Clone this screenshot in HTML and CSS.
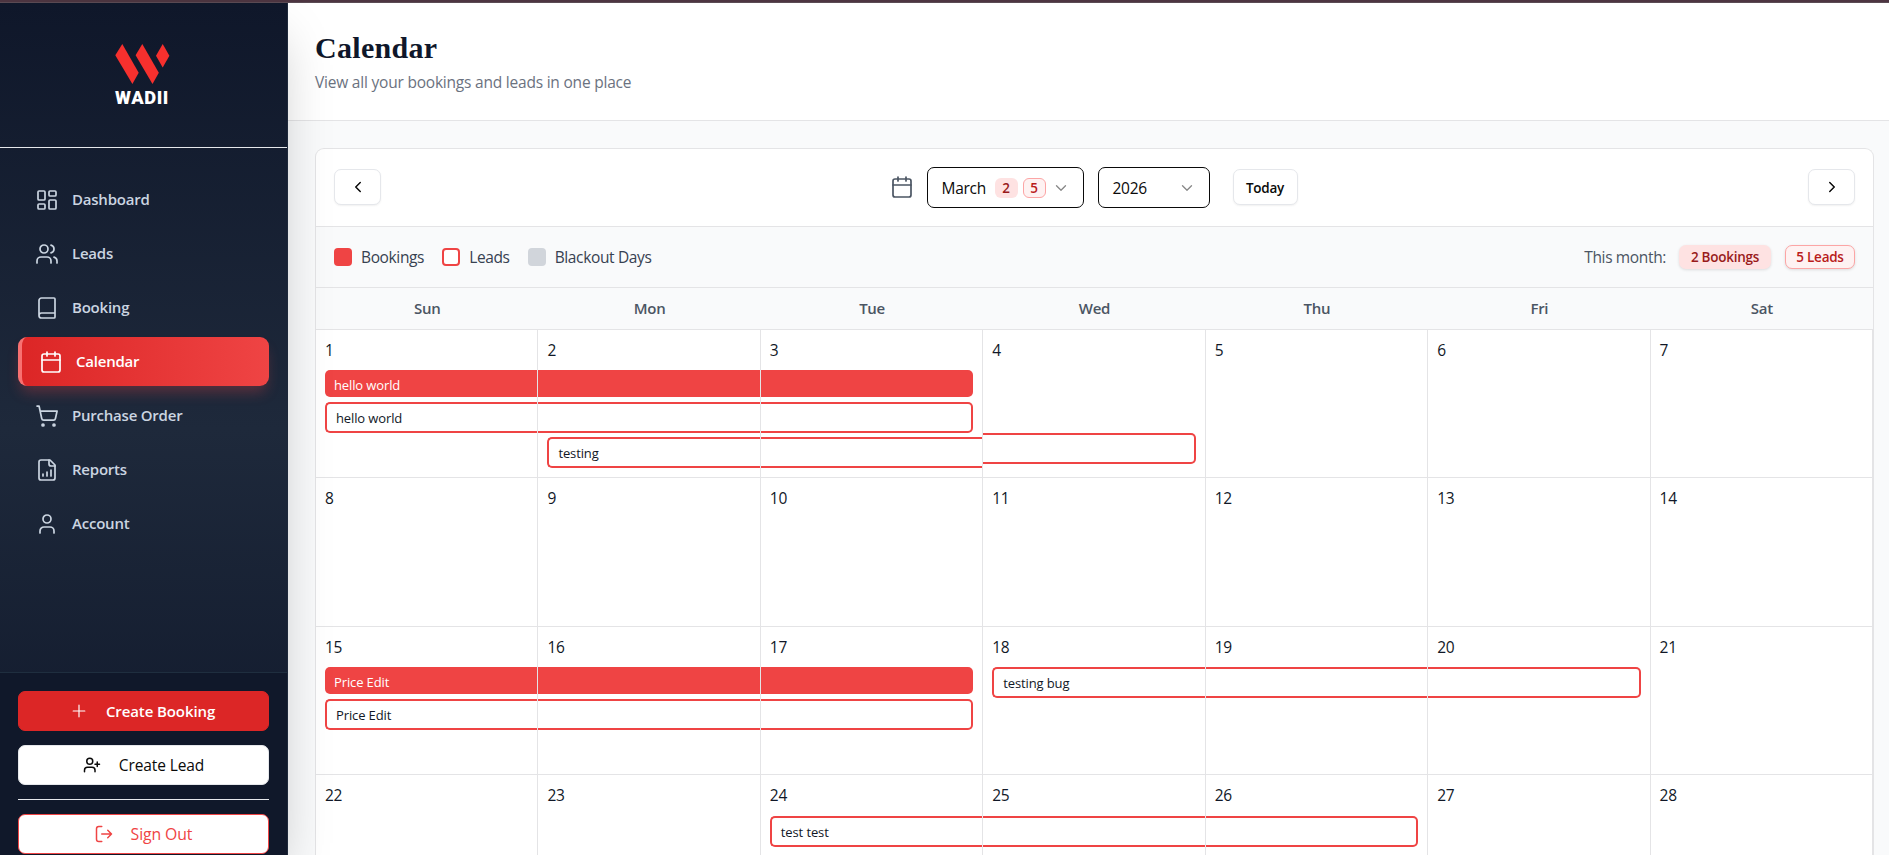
FILE: index.html
```html
<!DOCTYPE html>
<html lang="en">
<head>
<meta charset="utf-8">
<title>Calendar</title>
<link rel="stylesheet" href="styles.css">
</head>
<body>
<div class="strip"></div>
<div class="app">
  <aside class="sidebar">
    <div class="brand">
      <svg class="logo" width="60" height="70" viewBox="-2 0 60 70">
        <g fill="#f6302e">
          <path d="M8.300 2 24.700 30.700 18.400 42 1.300 13.300z"/>
          <path d="M28.300 2 44.800 30.700 38.500 42 21.600 13.300z"/>
          <path d="M48.700 2 55.400 13.700 48.700 25.500 42 13.700z"/>
        </g>
        <text class="logo-text" x="1" y="62" textLength="54" lengthAdjust="spacingAndGlyphs">WADII</text>
      </svg>
    </div>
    <nav class="nav">
      <a class="nav-item"><svg class="ico" viewBox="0 0 24 24"><rect x="3" y="3" width="7" height="9" rx="1"/><rect x="14" y="3" width="7" height="5" rx="1"/><rect x="14" y="12" width="7" height="9" rx="1"/><rect x="3" y="16" width="7" height="5" rx="1"/></svg><span>Dashboard</span></a>
      <a class="nav-item"><svg class="ico" viewBox="0 0 24 24"><path d="M16 21v-2a4 4 0 0 0-4-4H6a4 4 0 0 0-4 4v2"/><circle cx="9" cy="7" r="4"/><path d="M22 21v-2a4 4 0 0 0-3-3.870M16 3.130a4 4 0 0 1 0 7.750"/></svg><span>Leads</span></a>
      <a class="nav-item"><svg class="ico" viewBox="0 0 24 24"><path d="M4 19.500v-15A2.500 2.500 0 0 1 6.500 2H19a1 1 0 0 1 1 1v18a1 1 0 0 1-1 1H6.500a1 1 0 0 1 0-5H20"/></svg><span>Booking</span></a>
      <a class="nav-item active"><svg class="ico" viewBox="0 0 24 24"><path d="M8 2v4M16 2v4M3 10h18"/><rect x="3" y="4" width="18" height="18" rx="2"/></svg><span>Calendar</span></a>
      <a class="nav-item"><svg class="ico" viewBox="0 0 24 24"><circle cx="8" cy="21" r="1"/><circle cx="19" cy="21" r="1"/><path d="M2.050 2.050h2l2.660 12.420a2 2 0 0 0 2 1.580h9.780a2 2 0 0 0 1.950-1.570l1.650-7.430H5.120"/></svg><span>Purchase Order</span></a>
      <a class="nav-item"><svg class="ico" viewBox="0 0 24 24"><path d="M15 2H6a2 2 0 0 0-2 2v16a2 2 0 0 0 2 2h12a2 2 0 0 0 2-2V7Z"/><path d="M14 2v4a2 2 0 0 0 2 2h4M8 18v-2M12 18v-4M16 18v-6"/></svg><span>Reports</span></a>
      <a class="nav-item"><svg class="ico" viewBox="0 0 24 24"><path d="M19 21v-2a4 4 0 0 0-4-4H9a4 4 0 0 0-4 4v2"/><circle cx="12" cy="7" r="4"/></svg><span>Account</span></a>
    </nav>
    <div class="side-footer">
      <button class="side-btn booking"><svg class="ico-s" viewBox="0 0 24 24"><path d="M2 12h20M12 2v20"/></svg><span>Create Booking</span></button>
      <button class="side-btn lead"><svg class="ico-s" viewBox="0 0 24 24"><path d="M16 21v-2a4 4 0 0 0-4-4H6a4 4 0 0 0-4 4v2"/><circle cx="9" cy="7" r="4"/><path d="M19 8v6M22 11h-6"/></svg><span>Create Lead</span></button>
      <div class="divider"></div>
      <button class="side-btn signout"><svg class="ico-s" viewBox="0 0 24 24"><path d="M9 22H5a3 3 0 0 1-3-3V5a3 3 0 0 1 3-3h4M17 17l5-5-5-5M22 12H9"/></svg><span>Sign Out</span></button>
    </div>
  </aside>
  <main class="main">
    <header class="page-head">
      <h1>Calendar</h1>
      <p>View all your bookings and leads in one place</p>
    </header>
    <section class="card">
      <div class="toolbar">
        <button class="btn arrow"><svg viewBox="0 0 24 24"><path d="m15 18-6-6 6-6"/></svg></button>
        <div class="pickers">
          <svg class="ico cal" viewBox="0 0 24 24"><path d="M8 2v4M16 2v4M3 10h18"/><rect x="3" y="4" width="18" height="18" rx="2"/></svg>
          <div class="select month"><span class="value">March</span><span class="chip solid">2</span><span class="chip line">5</span><svg class="chev" viewBox="0 0 24 24"><path d="m6 9 6 6 6-6"/></svg></div>
          <div class="select year"><span class="value">2026</span><svg class="chev" viewBox="0 0 24 24"><path d="m6 9 6 6 6-6"/></svg></div>
          <button class="btn today">Today</button>
        </div>
        <button class="btn arrow"><svg viewBox="0 0 24 24"><path d="m9 18 6-6-6-6"/></svg></button>
      </div>
      <div class="legend">
        <div class="key"><i class="swatch red"></i>Bookings</div>
        <div class="key"><i class="swatch outline"></i>Leads</div>
        <div class="key"><i class="swatch gray"></i>Blackout Days</div>
        <div class="summary"><span class="label">This month:</span><span class="badge solid b1">2 Bookings</span><span class="badge line b2">5 Leads</span></div>
      </div>
      <div class="weekdays"><span>Sun</span><span>Mon</span><span>Tue</span><span>Wed</span><span>Thu</span><span>Fri</span><span>Sat</span></div>
      <div class="grid">
        <div class="cell"><b>1</b><div class="ev bk start">hello world</div><div class="ev ld start">hello world</div></div>
        <div class="cell"><b>2</b><div class="ev bk"></div><div class="ev ld"></div><div class="ev ld start">testing</div></div>
        <div class="cell"><b>3</b><div class="ev bk end"></div><div class="ev ld end"></div><div class="ev ld"></div></div>
        <div class="cell"><b>4</b><div class="ev gap"></div><div class="ev gap"></div><div class="ev ld end"></div></div>
        <div class="cell"><b>5</b></div>
        <div class="cell"><b>6</b></div>
        <div class="cell"><b>7</b></div>
        <div class="cell"><b>8</b></div>
        <div class="cell"><b>9</b></div>
        <div class="cell"><b>10</b></div>
        <div class="cell"><b>11</b></div>
        <div class="cell"><b>12</b></div>
        <div class="cell"><b>13</b></div>
        <div class="cell"><b>14</b></div>
        <div class="cell"><b>15</b><div class="ev bk start">Price Edit</div><div class="ev ld start">Price Edit</div></div>
        <div class="cell"><b>16</b><div class="ev bk"></div><div class="ev ld"></div></div>
        <div class="cell"><b>17</b><div class="ev bk end"></div><div class="ev ld end"></div></div>
        <div class="cell"><b>18</b><div class="ev ld start">testing bug</div></div>
        <div class="cell"><b>19</b><div class="ev ld"></div></div>
        <div class="cell"><b>20</b><div class="ev ld end"></div></div>
        <div class="cell"><b>21</b></div>
        <div class="cell"><b>22</b></div>
        <div class="cell"><b>23</b></div>
        <div class="cell"><b>24</b><div class="ev ld start">test test</div></div>
        <div class="cell"><b>25</b><div class="ev ld"></div></div>
        <div class="cell"><b>26</b><div class="ev ld end"></div></div>
        <div class="cell"><b>27</b></div>
        <div class="cell"><b>28</b></div>
      </div>
    </section>
  </main>
</div>
</body>
</html>
```
FILE: styles.css
```css
* { box-sizing: border-box; }
html, body { margin: 0; height: 100%; overflow: hidden; }
body {
  display: flex; flex-direction: column;
  font-family: "Open Sans", "Noto Sans", sans-serif;
  font-size: 15.500px; letter-spacing: -.27px; color: #111827; background: #f9fafb;
}
button { font: inherit; letter-spacing: inherit; margin: 0; }
svg { display: block; fill: none; stroke: currentColor; stroke-width: 1.700; stroke-linecap: round; stroke-linejoin: round; flex: none; }
.strip { height: 3px; flex: none; background: #4d3541; border-bottom: 1px solid #5b4b54; }
.app { display: flex; flex: 1; min-height: 0; }

.sidebar {
  width: 288px; flex: none; position: relative; z-index: 2;
  display: flex; flex-direction: column;
  border-right: 1px solid #1e293b;
  background: linear-gradient(180deg, #0f172a 0%, #1e293b 50%, #0f172a 100%);
  box-shadow: 0 25px 50px -12px rgba(0, 0, 0, .25);
}
.brand { height: 145px; flex: none; padding-top: 39px; border-bottom: 1px solid #e5e7eb; display: flex; justify-content: center; align-items: flex-start; padding-right: 3px; }
.logo { stroke: none; overflow: visible; }
.logo-text { font: 900 17.500px Roboto, sans-serif; letter-spacing: .6px; fill: #fff; }
.nav { flex: 1; padding: 27px 18px 0; display: flex; flex-direction: column; gap: 5px; }
.nav-item { height: 49px; display: flex; align-items: center; gap: 13px; padding: 0 0 1px 17px; border-radius: 9px; color: #cbd5e1; font-weight: 600; font-size: 15px; letter-spacing: -.22px; }
.nav-item.active { color: #fff; border-left: 4px solid #f87171; background: linear-gradient(90deg, #dc2626, #ef4444); box-shadow: 0 9px 14px -3px rgba(239, 68, 68, .3); }
.ico { width: 24px; height: 24px; }
.nav-item .ico { margin-top: 1px; }
.side-footer { flex: none; height: 183px; border-top: 1px solid #1f2e3f; background: #10182a; padding: 18px 18px 0; display: flex; flex-direction: column; }
.side-btn { height: 40px; flex: none; display: flex; align-items: center; justify-content: center; border-radius: 7px; border: 1px solid; font-weight: 600; font-size: 15px; padding: 0; letter-spacing: -.1px; }
.ico-s { width: 18px; height: 18px; margin-right: 18px; stroke-width: 2; }
.booking { background: #dc2626; border-color: #dc2626; color: #fff; }
.booking svg { width: 14px; height: 14px; margin-right: 20px; }
.lead { background: #fff; border-color: #e5e7eb; color: #0a0a0a; margin-top: 14px; font-weight: 500; font-size: 15.500px; }
.signout { background: #fff; border-color: #ef4444; color: #ef4444; margin-top: 14px; font-weight: 500; font-size: 15.800px; }
.divider { height: 1px; flex: none; margin-top: 14px; background: #e5e7eb; }

.main { flex: 1; min-width: 0; display: flex; flex-direction: column; overflow: hidden; }
.page-head { height: 118px; flex: none; background: #fff; border-bottom: 1px solid #e4e4e6; padding: 28px 27px 0; }
h1 { margin: 0; font: bold 30px/33px "Liberation Serif", serif; letter-spacing: .3px; color: #0f172a; }
.page-head p { margin: 6px 0 0; line-height: 24px; letter-spacing: -.21px; color: #6b7280; }
.card { flex: 1; min-height: 0; margin: 27px 15px 0 27px; border: 1px solid #e4e4e6; border-bottom: 0; border-radius: 9px 9px 0 0; background: #fff; overflow: hidden; }
.toolbar { height: 78px; display: flex; align-items: center; justify-content: space-between; padding: 0 18px; border-bottom: 1px solid #e4e4e6; }
.btn { height: 36px; padding: 0; display: flex; align-items: center; justify-content: center; background: #fff; border: 1px solid #e5e7eb; border-radius: 7px; box-shadow: 0 1px 2px rgba(0, 0, 0, .06); color: #0a0a0a; margin-bottom: 1px; }
.arrow { width: 47px; }
.arrow svg { width: 18px; height: 18px; stroke-width: 2; }
.pickers { display: flex; align-items: center; margin-right: 2px; }
.cal { color: #4b5563; margin-right: 13px; margin-bottom: 1px; }
.select { height: 41px; display: flex; align-items: center; border: 1px solid #0a0a0a; border-radius: 7px; padding: 0 14px; color: #0a0a0a; background: #fff; }
.month { width: 157px; margin-right: 14px; }
.year { width: 112px; margin-right: 23px; }
.month .value { width: 53px; }
.chev { width: 18px; height: 18px; color: #8a8a8a; margin-left: auto; margin-right: -1px; stroke-width: 1.800; }
.chip { width: 23px; height: 20px; border-radius: 6px; display: flex; align-items: center; justify-content: center; font-size: 13.500px; font-weight: 600; margin-right: 5px; }
.solid { background: #fee2e2; color: #991b1b; }
.line { background: #fef2f2; color: #b91c1c; border: 1px solid #fca5a5; }
.today { width: 65px; font-size: 13.500px; font-weight: 600; padding-top: 1px; }
.legend { height: 61px; display: flex; align-items: center; padding: 0 18px; gap: 18px; background: #f9fafb; border-bottom: 1px solid #e4e4e6; color: #374151; letter-spacing: -.36px; }
.key { display: flex; align-items: center; gap: 9px; }
.swatch { width: 18px; height: 18px; border-radius: 4px; }
.red { background: #ef4444; }
.outline { background: #fff; border: 2px solid #ef4444; }
.gray { background: #d1d5db; }
.summary { margin-left: auto; display: flex; align-items: center; color: #4b5563; }
.badge { height: 24px; border-radius: 7px; display: flex; align-items: center; justify-content: center; font-size: 13.500px; letter-spacing: -.25px; font-weight: 600; box-shadow: 0 1px 3px rgba(0, 0, 0, .12); }
.b1 { width: 92px; margin: 0 14px 0 13px; }
.b2 { width: 70px; }
.weekdays { height: 42px; display: grid; grid-template-columns: repeat(7, 1fr); align-items: center; text-align: center; background: #f9fafb; border-bottom: 1px solid #e4e4e6; padding-bottom: 2px; font-weight: 600; font-size: 15px; color: #4b5563; }
.grid { display: grid; grid-template-columns: repeat(7, 1fr); grid-auto-rows: 148.400px; }
.cell { min-width: 0; border-right: 1px solid #e4e4e6; border-bottom: 1px solid #e4e4e6; padding-top: 8px; display: flex; flex-direction: column; gap: 4.500px; }
.cell b { font-weight: 400; line-height: 24px; height: 27.950px; padding-left: 9px; }
.ev { flex: none; font-size: 13px; letter-spacing: -.12px; white-space: nowrap; }
.bk { height: 27px; background: #ef4444; color: #fff; line-height: 30px; }
.ld { height: 31px; border: solid #ef4444; border-width: 2px 0; line-height: 29px; }
.gap { height: 27px; }
.start { margin-left: 9px; padding-left: 9px; border-top-left-radius: 5px; border-bottom-left-radius: 5px; }
.ld.start { border-left-width: 2px; }
.end { margin-right: 9px; border-top-right-radius: 5px; border-bottom-right-radius: 5px; }
.ld.end { border-right-width: 2px; }
```
